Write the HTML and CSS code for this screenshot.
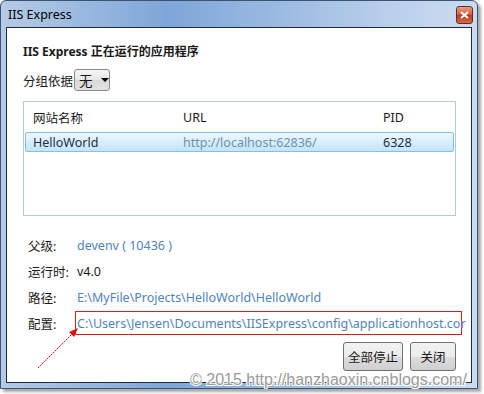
FILE: index.html
```html
<html>
  <head>
    <title>IIS Express</title>
    <link rel="stylesheet" href="styles.css">
  </head>
  <body>

  <div class="window">
    <div class="titlebar">
      <span class="title">IIS Express</span>
      <span class="close-btn">
        <svg width="9" height="8" viewBox="0 0 9 8"><path d="M1 1 L8 7 M8 1 L1 7" stroke="#fff" stroke-width="2"/></svg>
      </span>
    </div>

    <div class="client">
      <h1 class="heading">IIS Express 正在运行的应用程序</h1>

      <div class="group-row">
        <span>分组依据</span>
        <span class="combo">无<span class="arrow"></span></span>
      </div>

      <div class="list">
        <div class="list-row list-head">
          <span class="col-name">网站名称</span>
          <span class="col-url">URL</span>
          <span class="col-pid">PID</span>
        </div>
        <div class="list-row list-selected">
          <span class="col-name">HelloWorld</span>
          <span class="col-url url">http://localhost:62836/</span>
          <span class="col-pid">6328</span>
        </div>
      </div>

      <div class="details">
        <div class="detail">
          <span class="label">父级:</span>
          <span class="value link">devenv ( 10436 )</span>
        </div>
        <div class="detail">
          <span class="label">运行时:</span>
          <span class="value">v4.0</span>
        </div>
        <div class="detail">
          <span class="label">路径:</span>
          <span class="value link">E:\MyFile\Projects\HelloWorld\HelloWorld</span>
        </div>
        <div class="detail">
          <span class="label">配置:</span>
          <span class="value link boxed">C:\Users\Jensen\Documents\IISExpress\config\applicationhost.cor</span>
        </div>
      </div>

      <div class="buttons">
        <span class="btn btn-wide">全部停止</span>
        <span class="btn">关闭</span>
      </div>
    </div>
  </div>

  <!-- annotation arrow drawn over the screenshot -->
  <svg class="arrow-note" width="60" height="50" viewBox="0 0 60 50">
    <line x1="2" y1="48" x2="36" y2="14" stroke="#e01010" stroke-width="1" stroke-dasharray="2 1"/>
    <path d="M42 8 L33 12 L38 17 Z" fill="#e01010"/>
  </svg>

  <div class="watermark">© 2015 http://hanzhaoxin.cnblogs.com/</div>

  </body>
</html>
```

FILE: styles.css
```css
body {
  margin: 0;
  background-color: #ffffff;
  font-family: "Noto Sans", "Noto Sans CJK SC", sans-serif;
  font-size: 12.5px;
  color: #1a1a1a;
  position: relative;
  width: 484px;
  height: 394px;
  overflow: hidden;
}

/* window frame */
.window {
  width: 478px;
  height: 389px;
  box-sizing: border-box;
  border: 1px solid #3c5474;
  border-radius: 6px 6px 0 0;
  background: linear-gradient(to right, #b5cbe6, #7fa6d8 35%, #9dbce2 60%, #bed2ec 85%, #cbdcf0);
  padding: 0 5px 5px 5px;
  display: flex;
  flex-direction: column;
  box-shadow: 3px 3px 3px rgba(0, 0, 0, 0.35);
}

.titlebar {
  height: 26px;
  display: flex;
  align-items: center;
  justify-content: space-between;
  flex-shrink: 0;
}

.title {
  font-family: "Noto Sans", sans-serif;
  font-size: 12.5px;
  color: #000;
  padding-left: 2px;
  margin-top: 1px;
}

.close-btn {
  width: 17px;
  height: 18px;
  box-sizing: border-box;
  border: 1px solid #6b2a1e;
  border-radius: 3px;
  background: linear-gradient(#e8a08a, #d0573c 50%, #b83a1e 51%, #d46a48);
  display: flex;
  align-items: center;
  justify-content: center;
  margin-top: 2px;
  margin-right: -1px;
}

/* client area */
.client {
  flex: 1;
  background-color: #ffffff;
  border: 1px solid #1d2a3a;
  padding: 15px 15px 0 16px;
  display: flex;
  flex-direction: column;
  position: relative;
}

.heading {
  font-size: 12px;
  font-weight: bold;
  margin: 0;
  line-height: 18px;
}

.group-row {
  display: flex;
  align-items: center;
  gap: 1px;
  margin-top: 8px;
  height: 22px;
}

.combo {
  width: 36px;
  height: 22px;
  box-sizing: border-box;
  border: 1px solid #8a8a8a;
  border-radius: 3px;
  background: linear-gradient(#f5f5f5, #e6e6e6 50%, #d8d8d8 51%, #e2e2e2);
  display: flex;
  align-items: center;
  padding-left: 4px;
  gap: 8px;
  font-size: 13.5px;
}

.combo .arrow {
  width: 0;
  height: 0;
  border-left: 4px solid transparent;
  border-right: 4px solid transparent;
  border-top: 4px solid #000;
}

.list {
  margin-top: 10px;
  height: 115px;
  box-sizing: border-box;
  border: 1px solid #b5c9dd;
  padding: 0 1px;
  display: flex;
  flex-direction: column;
}

.list-row {
  display: flex;
  align-items: center;
  padding-left: 8px;
}

.list-head {
  height: 30px;
}

.list-selected {
  height: 20px;
  box-sizing: border-box;
  border: 1px solid #84c0e8;
  border-radius: 2px;
  background: linear-gradient(#f0f8fe, #d8eefc 50%, #c3e4fa);
  padding-left: 7px;
  color: #1c2f4f;
}

.col-name {
  width: 150px;
}

.col-url {
  width: 200px;
}

.url {
  color: #6e90b4;
}

.details {
  margin-top: 16px;
  display: flex;
  flex-direction: column;
}

.detail {
  display: flex;
  align-items: center;
  height: 26px;
  padding-left: 5px;
}

.label {
  width: 49px;
  flex-shrink: 0;
}

.link {
  color: #4f84b9;
}

.value {
  white-space: nowrap;
}

.boxed {
  width: 387px;
  height: 24px;
  box-sizing: border-box;
  border: 1px solid #d22020;
  margin-left: -2px;
  padding-left: 1px;
  display: flex;
  align-items: center;
  margin-right: -6px;
}

.buttons {
  display: flex;
  justify-content: flex-end;
  gap: 7px;
  margin-top: 6px;
}

.btn {
  height: 29px;
  width: 46px;
  box-sizing: border-box;
  border: 1px solid #707070;
  border-radius: 3px;
  background: linear-gradient(#f2f2f2, #ebebeb 50%, #dddddd 51%, #cfcfcf);
  display: flex;
  align-items: center;
  justify-content: center;
}

.btn-wide {
  width: 60px;
}

.arrow-note {
  position: absolute;
  left: 36px;
  top: 320px;
}

.watermark {
  position: absolute;
  left: 190px;
  top: 371px;
  font-family: "Liberation Sans", sans-serif;
  font-size: 16px;
  color: #9a9a9a;
  text-shadow: 1px 1px 0 #fff, -1px -1px 0 #fff, 1px -1px 0 #fff, -1px 1px 0 #fff;
}
```
